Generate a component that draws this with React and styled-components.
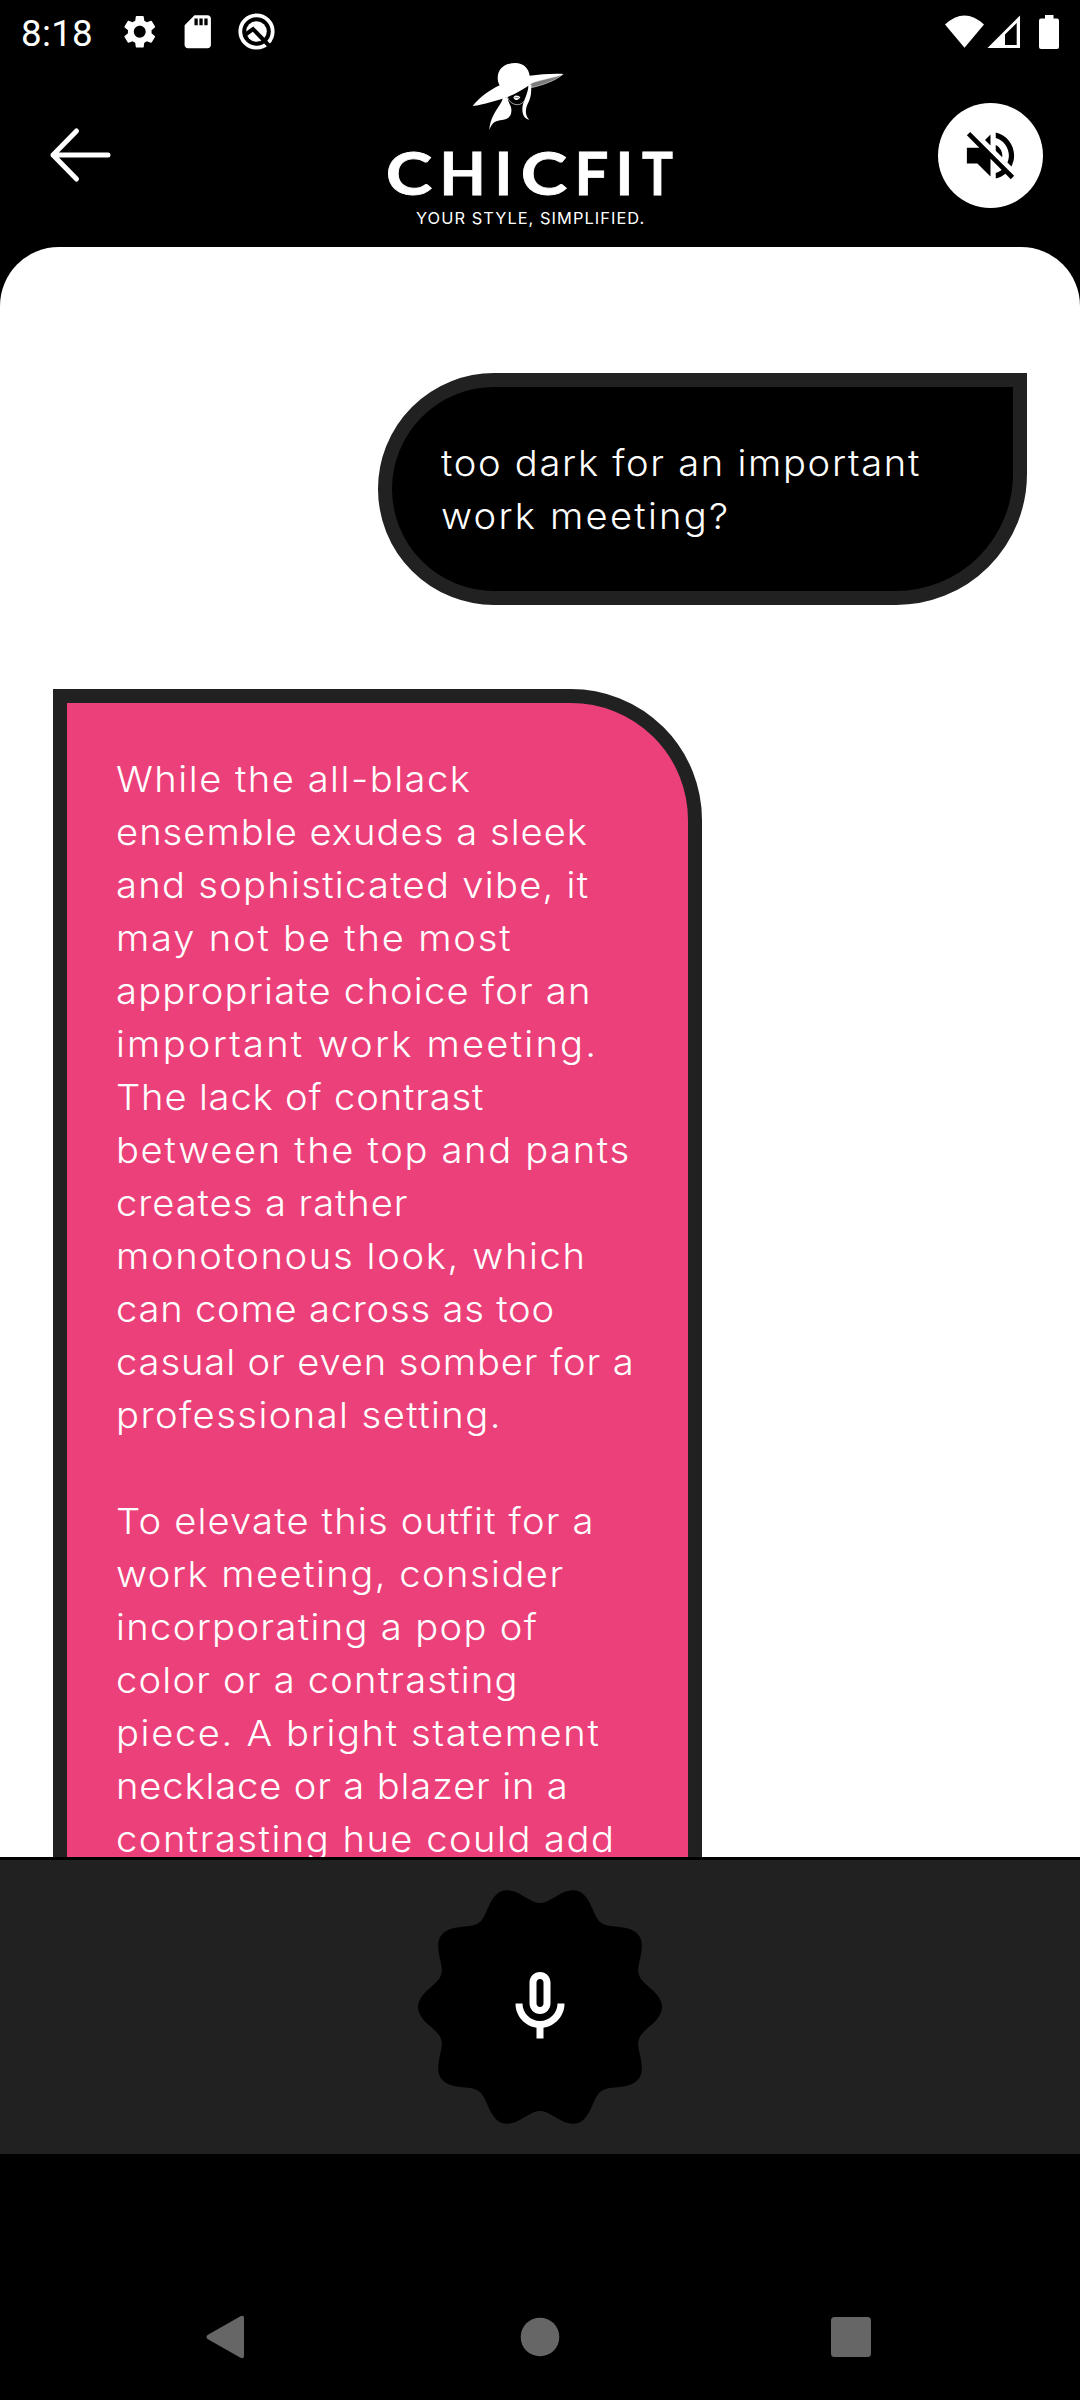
import React from "react";
import styled, { createGlobalStyle, css } from "styled-components";
import { MdSettings, MdSdCard } from "react-icons/md";

const GlobalStyle = createGlobalStyle`
  *, *::before, *::after { box-sizing: border-box; }
  html, body { margin: 0; padding: 0; background: #000; }
`;

const Screen = styled.div`
  width: 1080px;
  height: 2400px;
  display: flex;
  flex-direction: column;
  overflow: hidden;
  background: #000;
  color: #fff;
  font-family: Inter, "Liberation Sans", sans-serif;
`;

/* ---------- status bar ---------- */

const StatusBar = styled.div`
  height: 63px;
  flex: none;
  display: flex;
  align-items: center;
  justify-content: space-between;
  padding: 0 20px 0 21px;
`;

const StatusGroup = styled.div`
  display: flex;
  align-items: center;
`;

const Clock = styled.time`
  width: 99px;
  font-family: Roboto, sans-serif;
  font-size: 36.75px;
  line-height: 63px;
  letter-spacing: 0.3px;
  padding-top: 3px;
`;

const StatusIcon = styled.span`
  display: flex;
  flex: none;
  margin-left: ${(p) => p.$before || 0}px;

  svg {
    display: block;
  }
`;

/* ---------- header ---------- */

const Header = styled.header`
  height: 184px;
  flex: none;
  display: grid;
  grid-template-columns: 388px 284px 1fr;
`;

const BackButton = styled.button`
  width: 70px;
  height: 70px;
  margin: 57px 0 0 45px;
  padding: 0;
  border: 0;
  background: none;
`;

const MuteButton = styled.button`
  justify-self: end;
  display: flex;
  align-items: center;
  justify-content: center;
  width: 105px;
  height: 105px;
  margin: 40px 37px 0 0;
  padding: 0;
  border: 0;
  border-radius: 50%;
  background: #fff;
`;

const Logo = styled.div`
  display: flex;
  flex-direction: column;
`;

const HatArt = styled.svg`
  display: block;
  width: 120px;
  height: 82px;
  margin-left: 72px;
`;

const Wordmark = styled.div`
  display: flex;
  height: 57px;
  font-family: Lato, sans-serif;
  font-weight: 700;
  font-size: 60px;
  line-height: 55px;
`;

const Letter = styled.span`
  display: flex;
  justify-content: center;
  flex: none;
  width: ${(p) => p.$w}px;
  margin-left: ${(p) => p.$before}px;
  transform: translateX(${(p) => p.$shift || 0}px) scaleX(${(p) => p.$stretch || 1});
  -webkit-text-stroke: 0.8px #fff;
`;

const Tagline = styled.div`
  padding-left: 28px;
  font-size: 16.4px;
  font-weight: 400;
  line-height: 32px;
  letter-spacing: 1.05px;
  white-space: nowrap;
`;

/* ---------- chat ---------- */

const Sheet = styled.main`
  height: 1610px;
  flex: none;
  display: flex;
  flex-direction: column;
  gap: 84px;
  padding: 126px 53px 0;
  overflow: hidden;
  border-radius: 59px 59px 0 0;
  background: #fff;
`;

const Bubble = styled.article`
  width: 649px;
  flex: none;
  border: 14px solid #212121;
  font-size: 36px;
  font-weight: 300;
  line-height: 53px;

  ${(p) =>
    p.$mine
      ? css`
          align-self: flex-end;
          padding: 50px 50px 48px 48.5px;
          background: #000;
          border-radius: 116px 0 131px 116px;
        `
      : css`
          align-self: flex-start;
          padding: 50px 50px 200px 48.5px;
          background: #ec407a;
          border-radius: 0 131px 131px 131px;
        `}
`;

const Paragraph = styled.p`
  margin: 0;

  & + & {
    margin-top: 53px;
  }
`;

const Line = styled.span`
  display: block;
  white-space: nowrap;
  letter-spacing: ${(p) => p.$track}px;
  transform: scaleX(1.06);
  transform-origin: left center;
`;

/* ---------- bottom ---------- */

const VoicePanel = styled.section`
  height: 297px;
  flex: none;
  display: flex;
  align-items: center;
  justify-content: center;
  border-top: 3px solid #000;
  background: #212121;
`;

const MicButton = styled.button`
  display: block;
  width: 244px;
  height: 244px;
  padding: 0;
  border: 0;
  background: none;
`;

const NavBar = styled.nav`
  height: 126px;
  flex: none;
  display: flex;
  align-items: center;
  margin-top: 120px;
  padding-left: 206px;
`;

const NavButton = styled.button`
  width: 40px;
  height: 44px;
  margin: 0 ${(p) => p.$after}px 0 0;
  padding: 0;
  border: 0;
  background: none;

  svg {
    display: block;
    fill: #666;
  }
`;

const messages = [
  {
    mine: true,
    paragraphs: [
      [
        ["too dark for an important", 1.59],
        ["work meeting?", 2.09],
      ],
    ],
  },
  {
    mine: false,
    paragraphs: [
      [
        ["While the all-black", 1.41],
        ["ensemble exudes a sleek", 0.96],
        ["and sophisticated vibe, it", 1.2],
        ["may not be the most", 1.69],
        ["appropriate choice for an", 1.13],
        ["important work meeting.", 2.09],
        ["The lack of contrast", 0.78],
        ["between the top and pants", 1.55],
        ["creates a rather", 0.88],
        ["monotonous look, which", 1.54],
        ["can come across as too", 0.73],
        ["casual or even somber for a", 0.82],
        ["professional setting.", 1.35],
      ],
      [
        ["To elevate this outfit for a", 1.1],
        ["work meeting, consider", 1.37],
        ["incorporating a pop of", 1.26],
        ["color or a contrasting", 1.12],
        ["piece. A bright statement", 1.54],
        ["necklace or a blazer in a", 0.8],
        ["contrasting hue could add", 1.4],
      ],
    ],
  },
];

// Ten-lobed badge: the radius swings between 104 and 122 round the circle.
const badgePath =
  Array.from({ length: 360 }, (_, i) => {
    const a = (i * Math.PI) / 180;
    const r = 113 + 9 * Math.cos(10 * a);
    return `${i ? "L" : "M"}${(122 + r * Math.cos(a)).toFixed(2)} ${(122 + r * Math.sin(a)).toFixed(2)}`;
  }).join("") + "Z";

const Hat = () => (
  <HatArt viewBox="0 24 360 246" fill="#fff">
    <defs>
      <pattern id="weave" width="6" height="6" patternUnits="userSpaceOnUse" patternTransform="rotate(-20)">
        <rect width="6" height="6" fill="#bbb" />
        <circle cx="3" cy="3" r="1.9" fill="#000" />
      </pattern>
    </defs>
    <path d="M38 153C58 128 90 104 119 91C112 80 112 66 115 55C121 35 142 24 166 24C190 24 206 40 209 62C242 58 280 55 312 57C296 66 258 73 216 85C190 104 168 116 143 126C110 137 72 149 38 153Z" />
    <path d="M215 84C248 73 282 67 306 60C286 77 246 91 214 98Z" fill="url(#weave)" stroke="#fff" strokeWidth="1.5" />
    <path d="M128 130C126 150 92 174 88 225C96 200 110 197 126 195C146 193 156 182 154 162C153 148 143 143 143 126Z" />
    <path d="M205 90C206 116 187 140 187 162C187 180 194 192 208 194C194 182 196 160 204 145C213 128 215 112 213 88Z" />
    <path d="M143 128C149 143 162 149 172 149C182 149 189 144 193 137" fill="none" stroke="#ddd" strokeWidth="2.2" />
    <path d="M160 128C165 121 168 121 171 123C174 121 177 122 181 127C177 133 174 135 170 135C166 135 163 132 160 128Z" />
    <path d="M164 128H177" stroke="#000" strokeWidth="1.6" />
  </HatArt>
);

export default function App() {
  return (
    <Screen>
      <GlobalStyle />
      <StatusBar>
        <StatusGroup>
          <Clock>8:18</Clock>
          <StatusIcon>
            <MdSettings size={39.5} />
          </StatusIcon>
          <StatusIcon $before={18.5}>
            <MdSdCard size={39.5} />
          </StatusIcon>
          <StatusIcon $before={20.5}>
            <svg width="37" height="37" viewBox="0 0 37 37">
              <circle cx="18.5" cy="18.5" r="16.2" fill="none" stroke="#fff" strokeWidth="3.8" />
              <circle cx="18.5" cy="18.5" r="10.3" fill="#fff" />
              <path d="M7.5 21.5L15 16.2L31 32.5" fill="none" stroke="#000" strokeWidth="4" />
            </svg>
          </StatusIcon>
        </StatusGroup>
        <StatusGroup>
          <StatusIcon>
            <svg width="40" height="34" viewBox="0 0 40 34" fill="#fff">
              <path d="M0 9.5Q19.5 -8.5 39 9.5L19.5 32.7Z" />
            </svg>
          </StatusIcon>
          <StatusIcon $before={2}>
            <svg width="33" height="34" viewBox="0 0 33 34" fill="#fff" fillRule="evenodd">
              <path d="M.5 33L33 .5V33ZM18 19.5V30H29.7V8Z" />
            </svg>
          </StatusIcon>
          <StatusIcon $before={19}>
            <svg width="21" height="34" viewBox="0 0 21 34" fill="#fff">
              <rect x="6" width="8.5" height="5" />
              <rect y="3.5" width="20" height="30.5" rx="2" />
            </svg>
          </StatusIcon>
        </StatusGroup>
      </StatusBar>

      <Header>
        <BackButton aria-label="Back">
          <svg width="70" height="70" viewBox="0 0 70 70" fill="none" stroke="#fff" strokeWidth="5" strokeLinecap="round" strokeLinejoin="round">
            <path d="M63 35H8M31.5 11L8 35L31.5 59" />
          </svg>
        </BackButton>
        <Logo>
          <Hat />
          <Wordmark>
            <Letter $w={42} $before={0} $stretch={1.17}>C</Letter>
            <Letter $w={36} $before={14.5}>H</Letter>
            <Letter $w={9} $before={18.5}>I</Letter>
            <Letter $w={42} $before={15} $stretch={1.17}>C</Letter>
            <Letter $w={25} $before={15} $shift={-1}>F</Letter>
            <Letter $w={9} $before={15}>I</Letter>
            <Letter $w={29} $before={14} $stretch={0.86}>T</Letter>
          </Wordmark>
          <Tagline>YOUR STYLE, SIMPLIFIED.</Tagline>
        </Logo>
        <MuteButton aria-label="Unmute">
          <svg width="63" height="63" viewBox="0 0 24 24" fill="#000">
            <path d="M16.5 12c0-1.77-1.02-3.29-2.5-4.03v2.21l2.45 2.45c.03-.2.05-.41.05-.63zm2.5 0c0 .94-.2 1.82-.54 2.64l1.51 1.51C20.63 14.91 21 13.5 21 12c0-4.28-2.99-7.86-7-8.77v2.06c2.89.86 5 3.54 5 6.71zM4.27 3L3 4.27 7.73 9H3v6h4l5 5v-6.73l4.25 4.25c-.67.52-1.42.93-2.25 1.18v2.06c1.38-.31 2.63-.95 3.69-1.81L19.73 21 21 19.73l-9-9L4.27 3zM12 4L9.91 6.09 12 8.18V4z" />
          </svg>
        </MuteButton>
      </Header>

      <Sheet>
        {messages.map((message, m) => (
          <Bubble key={m} $mine={message.mine}>
            {message.paragraphs.map((lines, p) => (
              <Paragraph key={p}>
                {lines.map(([text, track]) => (
                  <Line key={text} $track={track}>
                    {text}
                  </Line>
                ))}
              </Paragraph>
            ))}
          </Bubble>
        ))}
      </Sheet>

      <VoicePanel>
        <MicButton aria-label="Speak">
          <svg width="244" height="244" viewBox="0 0 244 244">
            <path d={badgePath} fill="#000" />
            <path
              transform="translate(80 80) scale(3.5)"
              fill="#fff"
              d="M12 14c1.66 0 3-1.34 3-3V5c0-1.66-1.34-3-3-3S9 3.34 9 5v6c0 1.66 1.34 3 3 3zm-1-9c0-.55.45-1 1-1s1 .45 1 1v6c0 .55-.45 1-1 1s-1-.45-1-1V5zm6 6c0 2.76-2.24 5-5 5s-5-2.24-5-5H5c0 3.53 2.61 6.43 6 6.92V21h2v-3.08c3.39-.49 6-3.39 6-6.92h-2z"
            />
          </svg>
        </MicButton>
      </VoicePanel>

      <NavBar>
        <NavButton $after={274} aria-label="Back">
          <svg width="40" height="44" viewBox="0 0 40 44">
            <path d="M1.5 20L34.5 1.2Q38 -.2 38 3V41Q38 44.2 34.5 42.8L1.5 24Q-.5 22 1.5 20Z" />
          </svg>
        </NavButton>
        <NavButton $after={271} aria-label="Home">
          <svg width="40" height="44" viewBox="0 0 40 44">
            <circle cx="20" cy="22" r="19.3" />
          </svg>
        </NavButton>
        <NavButton $after={0} aria-label="Recent">
          <svg width="40" height="44" viewBox="0 0 40 44">
            <rect x="0" y="2" width="40" height="40" rx="3.5" />
          </svg>
        </NavButton>
      </NavBar>
    </Screen>
  );
}
